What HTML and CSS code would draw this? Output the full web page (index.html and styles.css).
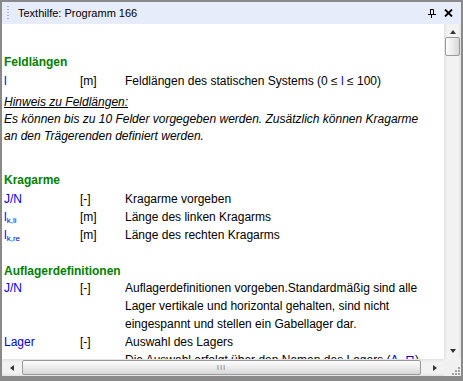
FILE: index.html
```html
<!DOCTYPE html>
<html lang="de">
<head>
<meta charset="UTF-8">
<title>Texthilfe: Programm 166</title>
<link rel="stylesheet" href="styles.css">
</head>
<body>

<div class="window">
    <div class="titlebar">
        <span class="grip"></span>
        <span class="title">Texthilfe: Programm 166</span>
        <span class="title-buttons">
            <svg class="pin" width="8" height="9" viewBox="0 0 8 9">
                <path d="M2 0.5h3.5v5M2.5 0.5v5M0 5.5h8M3.5 5.5v3.5" stroke="#000" stroke-width="1" fill="none"/>
            </svg>
            <svg class="close" width="9" height="8" viewBox="0 0 9 8">
                <path d="M1 0.5l7 7M8 0.5l-7 7" stroke="#000" stroke-width="1.8" fill="none"/>
            </svg>
        </span>
    </div>

    <div class="client">
        <div class="content">
            <h3 class="head first">Feldlängen</h3>
            <table class="params">
                <tr><td class="sym">l</td><td class="unit">[m]</td><td>Feldlängen des statischen Systems (0 ≤ <span class="sym">l</span> ≤ 100)</td></tr>
            </table>

            <p class="note"><u>Hinweis zu Feldlängen:</u><br>
            Es können bis zu 10 Felder vorgegeben werden. Zusätzlich können Kragarme an den Trägerenden definiert werden.</p>

            <h3 class="head">Kragarme</h3>
            <table class="params">
                <tr><td class="sym">J/N</td><td class="unit">[-]</td><td>Kragarme vorgeben</td></tr>
                <tr><td class="sym">l<sub>k,li</sub></td><td class="unit">[m]</td><td>Länge des linken Kragarms</td></tr>
                <tr><td class="sym">l<sub>k,re</sub></td><td class="unit">[m]</td><td>Länge des rechten Kragarms</td></tr>
            </table>

            <h3 class="head tight">Auflagerdefinitionen</h3>
            <table class="params">
                <tr><td class="sym">J/N</td><td class="unit">[-]</td><td>Auflagerdefinitionen vorgeben.Standardmäßig sind alle Lager vertikale und horizontal gehalten, sind nicht eingespannt und stellen ein Gabellager dar.</td></tr>
                <tr><td class="sym">Lager</td><td class="unit">[-]</td><td>Auswahl des Lagers</td></tr>
                <tr><td></td><td></td><td class="nowrap">Die Auswahl erfolgt über den Namen des Lagers (<span class="sym">&#916;</span>, <span class="sym">&#8719;</span>)</td></tr>
            </table>
        </div>

        <div class="vscroll">
            <span class="arrow up"></span>
            <span class="vthumb"></span>
            <span class="vtrack"></span>
            <span class="arrow down"></span>
        </div>

        <div class="hscroll">
            <span class="arrow left"></span>
            <span class="hthumb"><span class="ridges">III</span></span>
            <span class="arrow right"></span>
        </div>

        <div class="corner">
            <svg width="12" height="12" viewBox="0 0 12 12">
                <g fill="#a0a0a0">
                    <rect x="9" y="3" width="2" height="2"/>
                    <rect x="6" y="6" width="2" height="2"/>
                    <rect x="9" y="6" width="2" height="2"/>
                    <rect x="3" y="9" width="2" height="2"/>
                    <rect x="6" y="9" width="2" height="2"/>
                    <rect x="9" y="9" width="2" height="2"/>
                </g>
            </svg>
        </div>
    </div>
</div>

</body>
</html>
```

FILE: styles.css
```css
/* Dock window frame */
body {
    margin: 0;
    background-color: #ffffff;
    font-family: 'Liberation Sans', Arial, sans-serif;
}
.window {
    width: 463px;
    height: 381px;
    box-sizing: border-box;
    border: 2px solid #8a8a8a;
    border-bottom-width: 5px;
    display: flex;
    flex-direction: column;
    background-color: #ffffff;
}
.titlebar {
    height: 22px;
    flex: none;
    background-color: #e6ecfa;
    display: flex;
    align-items: center;
    color: #000000;
}
.grip {
    width: 2px;
    height: 15px;
    margin-left: 5px;
    margin-right: 9px;
    background-image: linear-gradient(#b4b4b4 50%, transparent 50%);
    background-size: 2px 3px;
}
.title {
    flex: 1;
    font-size: 11px;
}
.title-buttons {
    display: flex;
    align-items: center;
    gap: 8px;
    margin-right: 8px;
}

/* Client area with fake scroll bars */
.client {
    flex: 1;
    display: grid;
    grid-template-columns: 1fr 17px;
    grid-template-rows: 1fr 17px;
    min-height: 0;
}
.content {
    overflow: hidden;
    padding: 0 0 0 2px;
    font-size: 12px;
    color: #000000;
}
.head {
    margin: 26px 0 0 0;
    font-size: 12px;
    line-height: 18px;
    font-weight: bold;
    color: #008000;
}
.head.first {
    margin-top: 29px;
}
.head.tight {
    margin-top: 18px;
    margin-bottom: -2px;
}
.params {
    border-collapse: collapse;
    margin-top: 1px;
}
.params td {
    padding: 0;
    line-height: 18px;
    height: 18px;
    vertical-align: top;
}
.params td:first-child {
    width: 76px;
}
.params .unit {
    width: 45px;
}
.sym {
    color: #0000ee;
}
.sym sub {
    font-size: 8px;
    line-height: 0;
    vertical-align: -2px;
}
.nowrap {
    white-space: nowrap;
}
.note {
    margin: 4px 0 0 0;
    width: 425px;
    font-style: italic;
    line-height: 17px;
}

.vscroll {
    background: linear-gradient(to right, #e3e3e3, #f2f2f2 20%, #f2f2f2 80%, #e3e3e3);
    display: flex;
    flex-direction: column;
    align-items: center;
}
.vtrack {
    flex: 1;
}
.vthumb {
    width: 13px;
    height: 17px;
    margin-top: 3px;
    border: 1px solid #9a9a9a;
    border-radius: 2px;
    background: linear-gradient(to right, #fdfdfd, #e8e8e8 60%, #d6d6d6);
}
.arrow {
    width: 0;
    height: 0;
    border: 3px solid transparent;
}
.arrow.up {
    margin-top: 6px;
    border-top-width: 0;
    border-bottom: 4px solid #333333;
}
.arrow.down {
    margin-bottom: 6px;
    border-bottom-width: 0;
    border-top: 4px solid #333333;
}
.hscroll {
    background: linear-gradient(#e3e3e3, #f2f2f2 20%, #f2f2f2 80%, #e3e3e3);
    display: flex;
    align-items: center;
}
.arrow.left {
    margin-left: 8px;
    border-left-width: 0;
    border-right: 4px solid #333333;
}
.arrow.right {
    margin-right: 7px;
    border-right-width: 0;
    border-left: 4px solid #333333;
}
.hthumb {
    flex: 1;
    height: 13px;
    margin: 0 12px 0 8px;
    border: 1px solid #9a9a9a;
    border-radius: 2px;
    background: linear-gradient(#fdfdfd, #e8e8e8 60%, #d6d6d6);
    display: flex;
    justify-content: center;
    align-items: center;
}
.ridges {
    font-size: 8px;
    letter-spacing: 1px;
    color: #7a7a7a;
    line-height: 8px;
}
.corner {
    background-color: #f0f0f0;
    display: flex;
    align-items: flex-end;
    justify-content: flex-end;
}
```
